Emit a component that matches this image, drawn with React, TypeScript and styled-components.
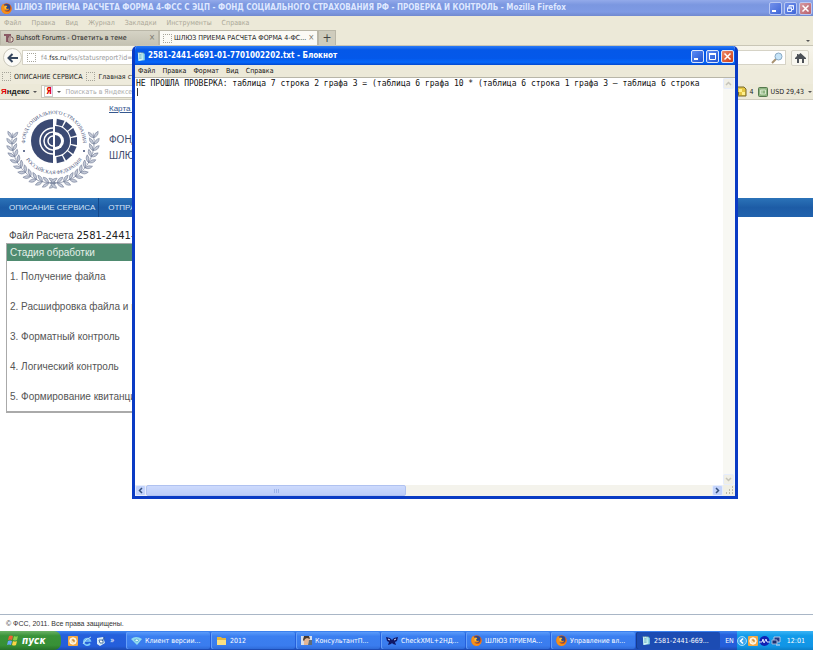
import React from 'react';
import styled, { createGlobalStyle, css } from 'styled-components';

const GlobalStyle = createGlobalStyle`
  * {
    box-sizing: border-box;
  }

  body {
    margin: 0;
    font-family: 'DejaVu Sans Condensed', 'DejaVu Sans', sans-serif;
    font-size: 8px;
    color: #222;
    overflow: hidden;
  }

  button,
  input {
    font: inherit;
    color: inherit;
    margin: 0;
    padding: 0;
    border: 0;
    background: none;
  }

  svg {
    display: block;
    flex: none;
  }
`;

const Screen = styled.div`
  position: relative;
  display: flex;
  flex-direction: column;
  height: 100vh;
  background: #fff;
`;

/* ---------- Shared window parts ---------- */

const Spacer = styled.div`
  flex: 1;
`;

const TitleText = styled.h1`
  flex: 1;
  margin: 0;
  font-size: 8px;
  line-height: 14px;
  font-weight: bold;
  white-space: nowrap;
  overflow: hidden;
`;

const WindowButtons = styled.div`
  display: flex;
  gap: 2px;
`;

const WindowButton = styled.button<{ $close?: boolean; $faded?: boolean }>`
  display: flex;
  align-items: center;
  justify-content: center;
  width: 13px;
  height: 13px;
  border: 1px solid ${({ $faded }) => ($faded ? '#b9c8f3' : '#dbe6fb')};
  border-radius: 2px;
  background: ${({ $close, $faded }) =>
    $close
      ? $faded
        ? 'linear-gradient(135deg, #d69aa0, #b8606c)'
        : 'linear-gradient(135deg, #f08a68, #cc3c16)'
      : $faded
        ? 'linear-gradient(135deg, #7391ea, #3f66d8)'
        : 'linear-gradient(135deg, #5c8df5, #2152cf)'};
`;

const MenuBar = styled.nav<{ $faded?: boolean }>`
  display: flex;
  align-items: center;
  background: #ece9d8;
  color: ${({ $faded }) => ($faded ? '#aaa797' : '#111')};
`;

const MenuItem = styled.button`
  font-size: 7px;
  line-height: 12px;
  white-space: nowrap;
`;

/* ---------- Browser ---------- */

const BrowserTitle = styled.header`
  display: flex;
  align-items: center;
  gap: 2px;
  height: 16px;
  padding: 0 1px;
  color: #dfe8ff;
  background: linear-gradient(#93aaea, #7b97e0 30%, #7e9ae4 75%, #7089cf);
`;

const BrowserMenu = styled(MenuBar)`
  height: 14px;
  padding: 0 4px;
  gap: 10px;
`;

const TabStrip = styled.div`
  display: flex;
  align-items: flex-end;
  height: 16px;
  background: #ece9d8;
  border-bottom: 1px solid #c9c6b6;
`;

const Tab = styled.div<{ $active?: boolean }>`
  display: flex;
  align-items: center;
  gap: 2px;
  width: 159px;
  height: 15px;
  padding: 0 3px;
  border: 1px solid #bab7a8;
  border-bottom: 0;
  background: ${({ $active }) => ($active ? '#fbfaf5' : 'linear-gradient(#d5d3c5, #c5c2b3)')};
`;

const TabLabel = styled.button`
  flex: 1;
  text-align: left;
  font-size: 7px;
  line-height: 12px;
  white-space: nowrap;
`;

const TabClose = styled.button`
  font-size: 8px;
  line-height: 10px;
  color: #77756b;
`;

const NewTab = styled.button`
  width: 18px;
  height: 15px;
  border: 1px solid #bab7a8;
  border-bottom: 0;
  background: #cfccbd;
  font-size: 12px;
  line-height: 12px;
  color: #444;
`;

const TabMenu = styled.button`
  align-self: center;
  padding: 6px 3px 0;
`;

const NavBar = styled.div`
  display: flex;
  align-items: center;
  height: 23px;
  padding: 0 4px 0 3px;
  background: linear-gradient(#f7f5ec, #efecdd);
`;

const BackButton = styled.button`
  display: flex;
  align-items: center;
  justify-content: center;
  width: 19px;
  height: 19px;
  border: 1px solid #cbc8bb;
  border-radius: 50%;
  background: #fbfaf6;
`;

const AddressBox = styled.label`
  display: flex;
  align-items: center;
  flex: 1;
  gap: 5px;
  height: 15px;
  padding: 0 4px;
  border: 1px solid #d6d3c6;
  background: #fff;
  font-size: 7px;
  color: #999;
  white-space: nowrap;

  b {
    font-weight: normal;
    color: #222;
  }
`;

const SearchBox = styled.label`
  display: flex;
  align-items: center;
  width: 120px;
  height: 15px;
  margin: 0 5px;
  padding: 0 2px;
  border: 1px solid #d6d3c6;
  background: #fff;

  input {
    flex: 1;
    min-width: 0;
    outline: 0;
  }
`;

const HomeButton = styled.button`
  display: flex;
  align-items: center;
  justify-content: center;
  width: 18px;
  height: 16px;
  border: 1px solid #d6d3c6;
  border-radius: 2px;
  background: #f8f7f0;
`;

const BookmarkBar = styled.div`
  display: flex;
  align-items: center;
  gap: 4px;
  height: 15px;
  padding: 0 2px;
  background: #eeebdc;
`;

const Bookmark = styled.button`
  display: flex;
  align-items: center;
  gap: 3px;
  font-size: 7px;
  line-height: 12px;
  white-space: nowrap;
`;

const BlankIcon = styled.span`
  flex: none;
  width: 9px;
  height: 9px;
  border: 1px dotted #a5a398;
  border-radius: 1px;
`;

const YandexBar = styled.div`
  display: flex;
  align-items: center;
  gap: 4px;
  height: 16px;
  padding: 0 1px;
  background: #ece9d8;
  border-bottom: 1px solid #cfccbe;
  white-space: nowrap;
`;

const YandexLogo = styled.button`
  font: bold 8px/12px 'DejaVu Sans Condensed', 'DejaVu Sans', sans-serif;
  font-family: 'Liberation Sans', Arial, sans-serif;

  b {
    color: #e00000;
  }
`;

const Arrow = styled.span`
  display: block;
  flex: none;
  border: 2px solid transparent;
  border-top-color: #555;
  border-bottom-width: 0;
`;

const YandexSearch = styled.label`
  display: flex;
  align-items: center;
  gap: 4px;
  width: 180px;
  height: 13px;
  padding: 0 2px;
  border: 1px solid #ccc9bb;
  background: #fff;

  input {
    flex: 1;
    min-width: 0;
    font-size: 7px;
    outline: 0;
  }

  input::placeholder {
    color: #aaa;
    opacity: 1;
  }
`;

const YandexBadge = styled.span`
  width: 9px;
  border: 1px solid #ccc;
  text-align: center;
  line-height: 9px;
  font-weight: bold;
  color: #e00000;
`;

/* ---------- Web page ---------- */

const Page = styled.main`
  flex: 1;
  min-height: 0;
  background: #fff;
  font-family: 'Liberation Sans', Arial, sans-serif;
`;

const PageHeader = styled.div`
  display: flex;
  gap: 9px;
  height: 98px;
  padding: 4px 6px;
`;

const HeaderText = styled.div`
  display: flex;
  flex-direction: column;
  gap: 18px;
`;

const MapLink = styled.a`
  font-size: 8px;
  line-height: 10px;
  color: #35588f;
`;

const SiteName = styled.h2`
  margin: 0;
  font-size: 10px;
  line-height: 16px;
  font-weight: normal;
  color: #3f4c6e;
`;

const SiteNav = styled.nav`
  display: flex;
  height: 19px;
  background: linear-gradient(#2b73b8, #1d5ca6 50%, #2162ad);
`;

const SiteLink = styled.a`
  padding: 0 3px 0 9px;
  border-right: 1px solid #164a8c;
  font-size: 8px;
  line-height: 20px;
  color: #d6e6f8;
  text-decoration: none;
`;

const FileTitle = styled.p`
  margin: 12px 0 0 9px;
  font-size: 10px;
  line-height: 14px;
  color: #444;

  span {
    font-family: 'DejaVu Sans', sans-serif;
    color: #222;
  }
`;

const StageTable = styled.table`
  width: 70%;
  margin-left: 6px;
  border: 1px solid #aaa;
  border-right-width: 2px;
  border-bottom-width: 2px;
  border-spacing: 0;
  font-size: 10px;
  color: #555;

  th {
    height: 17px;
    padding: 0 3px;
    background: #4f8b70;
    color: #e4efe9;
    font-weight: normal;
    text-align: left;
  }

  td {
    height: 30px;
    padding: 0 3px;
  }
`;

const PageFooter = styled.footer`
  height: 17px;
  padding: 0 6px;
  border-top: 1px solid #a9b6c6;
  background: #fff;
  font: 7px/17px 'Liberation Sans', Arial, sans-serif;
  color: #333;
`;

/* ---------- Notepad ---------- */

const NotepadWindow = styled.section`
  position: absolute;
  top: 46px;
  right: 75px;
  bottom: 151px;
  left: 132px;
  display: flex;
  flex-direction: column;
  border: 3px solid #0a3bc4;
  border-top: 0;
  border-radius: 5px 5px 0 0;
  background: #fff;
  overflow: hidden;
`;

const NotepadTitle = styled.header`
  display: flex;
  align-items: center;
  gap: 2px;
  height: 19px;
  flex: none;
  padding: 1px 1px 0;
  color: #fff;
  background: linear-gradient(#2c7bf5, #0558e8 20%, #0458ea 65%, #0668fb 85%, #0349cf);
`;

const NotepadMenu = styled(MenuBar)`
  height: 13px;
  flex: none;
  padding: 0 3px;
  gap: 7px;
  border-bottom: 1px solid #b8b6a8;
`;

const Editor = styled.div`
  display: flex;
  flex: 1;
  min-height: 0;
`;

const EditorText = styled.textarea`
  flex: 1;
  min-width: 0;
  margin: 0;
  padding: 1px;
  border: 0;
  outline: 0;
  resize: none;
  overflow: hidden;
  white-space: pre;
  font: 8px/9px 'DejaVu Sans Mono', 'Liberation Mono', monospace;
  color: #111;
  background: linear-gradient(#333, #333) 2px 10px / 1px 8px no-repeat #fff;
`;

const VerticalBar = styled.div`
  display: flex;
  flex-direction: column;
  justify-content: space-between;
  width: 12px;
  background: #f8f8f3;
`;

const HorizontalBar = styled.div`
  display: flex;
  height: 11px;
  flex: none;
  background: #f4f3ec;
`;

const scrollColors = css<{ $disabled?: boolean }>`
  background: ${({ $disabled }) => ($disabled ? '#f0efe6' : '#c3d3fb')};
  color: ${({ $disabled }) => ($disabled ? '#c5c4ba' : '#33507f')};
`;

const ScrollButton = styled.button<{ $disabled?: boolean }>`
  display: flex;
  align-items: center;
  justify-content: center;
  width: 11px;
  height: 11px;
  border: 1px solid #e6edfd;
  border-radius: 2px;
  ${scrollColors}
`;

const ScrollTrack = styled.div`
  flex: 1;
`;

const ScrollThumb = styled.div`
  display: flex;
  align-items: center;
  justify-content: center;
  width: 46%;
  height: 11px;
  border: 1px solid #b0c2f0;
  border-radius: 2px;
  background: linear-gradient(#cddafd, #bccdf8);
`;

const Grip = styled.span`
  width: 5px;
  height: 4px;
  background: repeating-linear-gradient(90deg, #9db3e8 0 1px, transparent 1px 2px);
`;

/* ---------- Taskbar ---------- */

const Taskbar = styled.footer`
  display: flex;
  align-items: stretch;
  height: 19px;
  background: linear-gradient(#3f86f0, #2560dc 20%, #245edb 80%, #1c49b0);
  color: #fff;
`;

const StartButton = styled.button`
  display: flex;
  align-items: center;
  gap: 3px;
  width: 61px;
  padding-left: 7px;
  border-radius: 0 7px 7px 0;
  background: linear-gradient(#6cb267, #3a9339 25%, #379036 75%, #26702a);
  font: italic bold 10px/18px 'DejaVu Sans Condensed', 'DejaVu Sans', sans-serif;
  color: #fff;
`;

const QuickLaunch = styled.div`
  display: flex;
  align-items: center;
  gap: 4px;
  width: 65px;
  padding-left: 7px;
`;

const QuickButton = styled.button`
  line-height: 10px;
`;

const Tasks = styled.div`
  display: flex;
  flex: 1;
  gap: 1px;
  min-width: 0;
`;

const TaskButton = styled.button<{ $active?: boolean }>`
  display: flex;
  align-items: center;
  gap: 3px;
  flex: 1;
  min-width: 0;
  margin: 1px 0;
  padding: 0 5px;
  border-radius: 2px;
  background: ${({ $active }) =>
    $active ? '#1c4cb3' : 'linear-gradient(#5a9bfb, #3b7ff0 25%, #3a7cee 80%, #2f6bd8)'};
  box-shadow: inset 1px 0 ${({ $active }) => ($active ? '#153c90' : '#67a0f8')};
  font-size: 7px;
  line-height: 16px;
  white-space: nowrap;
`;

const Language = styled.button`
  padding: 0 3px 0 5px;
  font-size: 7px;
`;

const Tray = styled.div`
  display: flex;
  align-items: center;
  gap: 1px;
  padding-right: 8px;
  background: linear-gradient(#3bb4f5, #129be9 25%, #1195e6 80%, #0c7fc8);
  font-size: 7px;

  time {
    margin-left: 5px;
  }
`;

/* ---------- Icons ---------- */

const FirefoxIcon = () => (
  <svg width='11' height='11' viewBox='0 0 16 16'>
    <circle cx='8' cy='8' r='7.5' fill='#d9590f' />
    <circle cx='8.5' cy='6.5' r='5' fill='#29468f' />
    <path d='M1 4l2-3 2 3c2-1 4 0 4 1L7 7c1 2 3 2 5 1-1 3-5 4-7 2 1 3 5 4 8 2 2-2 2-5 1-8 3 5 1 11-6 12C2 16-1 10 1 4z' fill='#f3901d' />
    <path d='M5 5c1-1 3-1 4 0L7 7l1 2-3-1z' fill='#fac63c' />
  </svg>
);

const NotepadIcon = () => (
  <svg width='10' height='11' viewBox='0 0 16 16'>
    <path d='M3 2h9l2 2v10l-10 1z' fill='#8fd8e4' />
    <path d='M3 2h7l1 11-7 2z' fill='#d1f2f5' />
    <path d='M5 5h4M5 7h4M5 9h4M5 11h4' stroke='#4ea3b4' />
    <path d='M3 1v2M6 1v2M9 1v2M12 1v2' stroke='#577' />
  </svg>
);

const MinimizeIcon = () => (
  <svg width='9' height='9' viewBox='0 0 9 9'>
    <path d='M1 7h4' stroke='#fff' strokeWidth='2' />
  </svg>
);

const MaximizeIcon = () => (
  <svg width='9' height='9' viewBox='0 0 9 9'>
    <path d='M1.500 2v5.500h6V2z' fill='none' stroke='#fff' />
    <path d='M1 2h7' stroke='#fff' strokeWidth='2' />
  </svg>
);

const RestoreIcon = () => (
  <svg width='9' height='9' viewBox='0 0 9 9'>
    <path d='M3 3V1.500h4.500v4H6M1.500 4h4v3.500h-4zM3 2h5M1 4h5' fill='none' stroke='#e8efff' />
  </svg>
);

const CloseIcon = () => (
  <svg width='9' height='9' viewBox='0 0 9 9'>
    <path d='M1.500 1.500l6 6M7.500 1.500l-6 6' stroke='#fff' strokeWidth='1.500' />
  </svg>
);

const BuhsoftIcon = () => (
  <svg width='10' height='10' viewBox='0 0 10 10'>
    <path d='M0 1h7v2H5v6H2V3H0z' fill='#8b5a65' />
    <path d='M4 4h4l1 1v3L8 9H4zM6 5v3' fill='#e7ddc9' stroke='#77505a' />
  </svg>
);

const BackIcon = () => (
  <svg width='11' height='10' viewBox='0 0 11 10'>
    <path d='M5.500 1L1.500 5l4 4M2 5h9' fill='none' stroke='#34455d' strokeWidth='2' />
  </svg>
);

const SearchIcon = () => (
  <svg width='12' height='12' viewBox='0 0 12 12'>
    <path d='M5 7l-4 4' stroke='#a89170' strokeWidth='2' />
    <circle cx='7.500' cy='4.500' r='3.500' fill='#c6e4f8' stroke='#8aa9c4' />
  </svg>
);

const HomeIcon = () => (
  <svg width='11' height='10' viewBox='0 0 11 10'>
    <path d='M5.500 0L11 5v1H9v4H7V6H4v4H2V6H0V5l2-2V1h1.500v1z' fill='#4c5157' />
  </svg>
);

const WeatherIcon = () => (
  <svg width='11' height='11' viewBox='0 0 11 11'>
    <path d='M1 1h7l2 2v7H2z' fill='#e5c644' stroke='#77682b' />
    <path d='M3 3h3v3h3v3H6V6H3z' fill='#fff08b' />
    <path d='M0 6h3v3H0z' fill='#6c6534' />
  </svg>
);

const MoneyIcon = () => (
  <svg width='10' height='10' viewBox='0 0 10 10'>
    <rect x='.5' y='.5' width='9' height='9' rx='1' fill='#8eb581' stroke='#55794e' />
    <path d='M2.500 3h5v4h-5zM4 3v4' fill='none' stroke='#d3e5c8' />
  </svg>
);

const WindowsFlag = () => (
  <svg width='12' height='11' viewBox='0 0 12 11'>
    <path d='M2 1q2-1 4 0L5 5Q3 4 1 5z' fill='#ee6033' />
    <path d='M7 1q2 1 4 0l-1 4q-2 1-4 0z' fill='#8bd34a' />
    <path d='M1 6q2-1 4 0l-1 4q-2-1-4 0z' fill='#6aa8f8' />
    <path d='M6 6q2 1 4 0l-1 4q-2 1-4 0z' fill='#fad444' />
  </svg>
);

const ClockIcon = () => (
  <svg width='10' height='10' viewBox='0 0 10 10'>
    <rect width='10' height='10' rx='1' fill='#f3a944' />
    <circle cx='5' cy='5' r='3.200' fill='#fbe4b5' stroke='#fff' />
    <path d='M5 3v2h2' fill='none' stroke='#b96c14' />
  </svg>
);

const ExplorerIcon = () => (
  <svg width='10' height='10' viewBox='0 0 10 10'>
    <path d='M8 7.500A3.300 3.300 0 118.300 5H2.500' fill='none' stroke='#7cc8f8' strokeWidth='1.700' />
    <path d='M1 8Q3 3 9 1' fill='none' stroke='#b8dcf5' />
  </svg>
);

const DesktopIcon = () => (
  <svg width='10' height='10' viewBox='0 0 10 10'>
    <path d='M1 2l6-1 2 6-5 3-3-2z' fill='#d9ebf7' />
    <path d='M3 4h4v3H4z' fill='#fff' stroke='#4979a8' />
    <path d='M6 5l3-4' stroke='#365f94' />
  </svg>
);

const ClientIcon = () => (
  <svg width='11' height='10' viewBox='0 0 11 10'>
    <path d='M0 3q5-4 11 0L6 9z' fill='#8fdbef' />
    <path d='M3 4q3-2 5 0L6 6z' fill='#e0fbff' stroke='#6db9dc' />
  </svg>
);

const FolderIcon = () => (
  <svg width='11' height='10' viewBox='0 0 11 10'>
    <path d='M1 1h4l1 1h4v7H1z' fill='#e4b63c' />
    <path d='M1 4h9v5H1z' fill='#fbe083' />
  </svg>
);

const ConsultantIcon = () => (
  <svg width='11' height='11' viewBox='0 0 11 11'>
    <path d='M0 1h11v9H0z' fill='#d8dfea' />
    <path d='M3 10V7L2 4l2-3h4l1 3-2 4v2z' fill='#e3b694' />
    <path d='M2 5l1-4h5l1 3-3-1-2 1-1 2z' fill='#463931' />
    <path d='M8 5h3v5H7z' fill='#5f6c78' />
  </svg>
);

const ButterflyIcon = () => (
  <svg width='12' height='10' viewBox='0 0 12 10'>
    <path d='M0 1l4 1 2 2 2-2 4-1-1 4-2 1 1 3-3-1-1-1-1 1-3 1 1-3-2-1z' fill='#101766' />
    <path d='M2 3l2 1M10 3L8 4' stroke='#d9e1ff' />
  </svg>
);

const TrayArrow = () => (
  <svg width='10' height='10' viewBox='0 0 10 10'>
    <circle cx='5' cy='5' r='4.500' fill='#3da7ed' stroke='#a1dcfa' />
    <path d='M6 2.500L3.500 5 6 7.500' fill='none' stroke='#fff' strokeWidth='1.500' />
  </svg>
);

const SignalIcon = () => (
  <svg width='11' height='10' viewBox='0 0 11 10'>
    <circle cx='5.500' cy='5' r='5' fill='#1122b4' />
    <path d='M0 6h3l1-3 1 4 2-4 1 3h3' fill='none' stroke='#dce5ff' />
  </svg>
);

const NetworkIcon = () => (
  <svg width='10' height='10' viewBox='0 0 10 10'>
    <path d='M3 1h6v5H3z' fill='#233986' stroke='#b6c8e6' />
    <path d='M1 4h5v4H1z' fill='#1c2f70' stroke='#9fb4d8' />
    <path d='M5 9h4' stroke='#dde' />
  </svg>
);

const Chevron = ({ angle = 0 }: { angle?: number }) => (
  <svg width='7' height='7' viewBox='0 0 7 7'>
    <path d='M1 2l2.500 2.500L6 2' fill='none' stroke='currentColor' strokeWidth='1.500' transform={`rotate(${angle} 3.500 3.500)`} />
  </svg>
);

const ResizeGrip = () => (
  <svg width='12' height='11' viewBox='0 0 12 11'>
    <rect width='12' height='11' fill='#f0efe4' />
    <path d='M9 2h1M9 5h1M6 5h1M9 8h1M6 8h1M3 8h1' stroke='#bdbaa9' strokeWidth='2' />
  </svg>
);

const rays = [-75, -50, -25, 0, 25, 50, 75];
const leaves = [0, 1, 2, 3, 4, 5, 6, 7, 8, 9, 10, 11];

const Wreath = () => (
  <g fill='#c3c9d6' stroke='#65718e' strokeWidth='.5'>
    {leaves.map((i) => {
      const angle = 186 - i * 9;
      const x = 47 + 41 * Math.cos((angle * Math.PI) / 180);
      const y = 38 + 41 * Math.sin((angle * Math.PI) / 180);
      return (
        <g key={i} transform={`translate(${x} ${y}) rotate(${angle + 90})`}>
          <path d='M0 0q1-5 6-5-1 4-6 5z' />
          <path d='M0 0q1 5 6 5-1-4-6-5z' />
          <path d='M-2 0h7' fill='none' />
        </g>
      );
    })}
  </g>
);

const FssLogo = () => (
  <svg width='94' height='86' viewBox='0 0 94 86'>
    <defs>
      <path id='arc-top' d='M20.400 48A29 29 0 1175.600 48' />
      <path id='arc-bottom' d='M17 50A34 34 0 0079 50' />
    </defs>
    <Wreath />
    <g transform='translate(94 0) scale(-1 1)'>
      <Wreath />
    </g>
    <circle cx='48' cy='37' r='35' fill='#fff' />
    <path d='M47 15a22 22 0 000 44z' fill='#3b4a73' />
    <path d='M47 24a13 13 0 000 26M47 28a9 9 0 000 18M47 32a5 5 0 000 10' fill='none' stroke='#fff' strokeWidth='1.500' />
    <path d='M49 22a15 15 0 010 30z' fill='#3b4a73' />
    <path d='M49 28a9 9 0 010 18z' fill='#fff' />
    <path d='M49 31a6 6 0 010 12z' fill='#3b4a73' />
    {rays.map((angle) => (
      <path key={angle} d='M65 34l6-1v8l-6-1z' fill='#3b4a73' transform={`rotate(${angle} 49 37)`} />
    ))}
    <g fontFamily='Liberation Serif, serif' fontSize='5' fill='#3b4a73'>
      <text textAnchor='middle'>
        <textPath href='#arc-top' startOffset='50%'>ФОНД СОЦИАЛЬНОГО СТРАХОВАНИЯ</textPath>
      </text>
      <text textAnchor='middle'>
        <textPath href='#arc-bottom' startOffset='50%'>РОССИЙСКАЯ ФЕДЕРАЦИЯ</textPath>
      </text>
    </g>
    <circle cx='18' cy='47' r='1' fill='#3b4a73' />
    <circle cx='78' cy='47' r='1' fill='#3b4a73' />
  </svg>
);

/* ---------- Data ---------- */

const browserMenu = ['Файл', 'Правка', 'Вид', 'Журнал', 'Закладки', 'Инструменты', 'Справка'];
const notepadMenu = ['Файл', 'Правка', 'Формат', 'Вид', 'Справка'];

const stages = [
  '1. Получение файла',
  '2. Расшифровка файла и проверка',
  '3. Форматный контроль',
  '4. Логический контроль',
  '5. Формирование квитанции',
];

const tasks = [
  { icon: <ClientIcon />, title: 'Клиент версии...' },
  { icon: <FolderIcon />, title: '2012' },
  { icon: <ConsultantIcon />, title: 'КонсультантП...' },
  { icon: <ButterflyIcon />, title: 'CheckXML+2НД...' },
  { icon: <FirefoxIcon />, title: 'ШЛЮЗ ПРИЕМА...' },
  { icon: <FirefoxIcon />, title: 'Управление вл...' },
  { icon: <NotepadIcon />, title: '2581-2441-669...', active: true },
];

const report =
  'НЕ ПРОШЛА ПРОВЕРКА: таблица 7 строка 2 графа 3 = (таблица 6 графа 10 * (таблица 6 строка 1 графа 3 – таблица 6 строка';

const Browser = () => {
  return (
    <>
      <BrowserTitle>
        <FirefoxIcon />
        <TitleText>ШЛЮЗ ПРИЕМА РАСЧЕТА ФОРМА 4-ФСС С ЭЦП - ФОНД СОЦИАЛЬНОГО СТРАХОВАНИЯ РФ - ПРОВЕРКА И КОНТРОЛЬ - Mozilla Firefox</TitleText>
        <WindowButtons>
          <WindowButton $faded aria-label='Свернуть'><MinimizeIcon /></WindowButton>
          <WindowButton $faded aria-label='Восстановить'><RestoreIcon /></WindowButton>
          <WindowButton $faded $close aria-label='Закрыть'><CloseIcon /></WindowButton>
        </WindowButtons>
      </BrowserTitle>
      <BrowserMenu $faded>
        {browserMenu.map((item) => (
          <MenuItem key={item}>{item}</MenuItem>
        ))}
      </BrowserMenu>
      <TabStrip>
        <Tab>
          <BuhsoftIcon />
          <TabLabel>Buhsoft Forums - Ответить в теме</TabLabel>
          <TabClose>×</TabClose>
        </Tab>
        <Tab $active>
          <BlankIcon />
          <TabLabel>ШЛЮЗ ПРИЕМА РАСЧЕТА ФОРМА 4-ФС...</TabLabel>
          <TabClose>×</TabClose>
        </Tab>
        <NewTab>+</NewTab>
        <Spacer />
        <TabMenu aria-label='Список вкладок'><Arrow /></TabMenu>
      </TabStrip>
      <NavBar>
        <BackButton aria-label='Назад'><BackIcon /></BackButton>
        <AddressBox>
          <BlankIcon />
          <span>f4.<b>fss.ru</b>/fss/statusreport?id=</span>
        </AddressBox>
        <SearchBox>
          <input aria-label='Поиск' />
          <SearchIcon />
        </SearchBox>
        <HomeButton aria-label='Домой'><HomeIcon /></HomeButton>
      </NavBar>
      <BookmarkBar>
        <Bookmark><BlankIcon />ОПИСАНИЕ СЕРВИСА</Bookmark>
        <Bookmark><BlankIcon />Главная страница</Bookmark>
      </BookmarkBar>
      <YandexBar>
        <YandexLogo><b>Я</b>ндекс</YandexLogo>
        <Arrow />
        <YandexSearch>
          <YandexBadge>Я</YandexBadge>
          <Arrow />
          <input aria-label='Поиск в Яндексе' placeholder='Поискать в Яндексе' />
        </YandexSearch>
        <Spacer />
        <Bookmark><WeatherIcon />4</Bookmark>
        <Bookmark><MoneyIcon />USD 29,43</Bookmark>
        <Arrow />
      </YandexBar>
      <Page>
        <PageHeader>
          <FssLogo />
          <HeaderText>
            <MapLink href='#'>Карта сайта</MapLink>
            <SiteName>ФОНД<br />ШЛЮЗ</SiteName>
          </HeaderText>
        </PageHeader>
        <SiteNav>
          <SiteLink href='#'>ОПИСАНИЕ СЕРВИСА</SiteLink>
          <SiteLink href='#'>ОТПРАВКА</SiteLink>
        </SiteNav>
        <FileTitle>Файл Расчета <span>2581-2441-6691</span></FileTitle>
        <StageTable>
          <thead>
            <tr><th>Стадия обработки</th></tr>
          </thead>
          <tbody>
            {stages.map((stage) => (
              <tr key={stage}><td>{stage}</td></tr>
            ))}
          </tbody>
        </StageTable>
      </Page>
      <PageFooter>© ФСС, 2011. Все права защищены.</PageFooter>
    </>
  );
};

const Notepad = () => {
  return (
    <NotepadWindow>
      <NotepadTitle>
        <NotepadIcon />
        <TitleText>2581-2441-6691-01-7701002202.txt - Блокнот</TitleText>
        <WindowButtons>
          <WindowButton aria-label='Свернуть'><MinimizeIcon /></WindowButton>
          <WindowButton aria-label='Развернуть'><MaximizeIcon /></WindowButton>
          <WindowButton $close aria-label='Закрыть'><CloseIcon /></WindowButton>
        </WindowButtons>
      </NotepadTitle>
      <NotepadMenu>
        {notepadMenu.map((item) => (
          <MenuItem key={item}>{item}</MenuItem>
        ))}
      </NotepadMenu>
      <Editor>
        <EditorText aria-label='Текст' defaultValue={report} spellCheck={false} />
        <VerticalBar>
          <ScrollButton $disabled aria-label='Вверх'><Chevron angle={180} /></ScrollButton>
          <ScrollButton $disabled aria-label='Вниз'><Chevron /></ScrollButton>
        </VerticalBar>
      </Editor>
      <HorizontalBar>
        <ScrollButton aria-label='Влево'><Chevron angle={90} /></ScrollButton>
        <ScrollTrack>
          <ScrollThumb><Grip /></ScrollThumb>
        </ScrollTrack>
        <ScrollButton aria-label='Вправо'><Chevron angle={-90} /></ScrollButton>
        <ResizeGrip />
      </HorizontalBar>
    </NotepadWindow>
  );
};

const App = () => {
  return (
    <Screen>
      <GlobalStyle />
      <Browser />
      <Taskbar>
        <StartButton><WindowsFlag />пуск</StartButton>
        <QuickLaunch>
          <QuickButton aria-label='Часы'><ClockIcon /></QuickButton>
          <QuickButton aria-label='Internet Explorer'><ExplorerIcon /></QuickButton>
          <QuickButton aria-label='Рабочий стол'><DesktopIcon /></QuickButton>
          <QuickButton>»</QuickButton>
        </QuickLaunch>
        <Tasks>
          {tasks.map(({ icon, title, active }) => (
            <TaskButton key={title} $active={active}>{icon}{title}</TaskButton>
          ))}
        </Tasks>
        <Language>EN</Language>
        <Tray>
          <TrayArrow />
          <ClockIcon />
          <SignalIcon />
          <NetworkIcon />
          <time>12:01</time>
        </Tray>
      </Taskbar>
      <Notepad />
    </Screen>
  );
};

export default App;
